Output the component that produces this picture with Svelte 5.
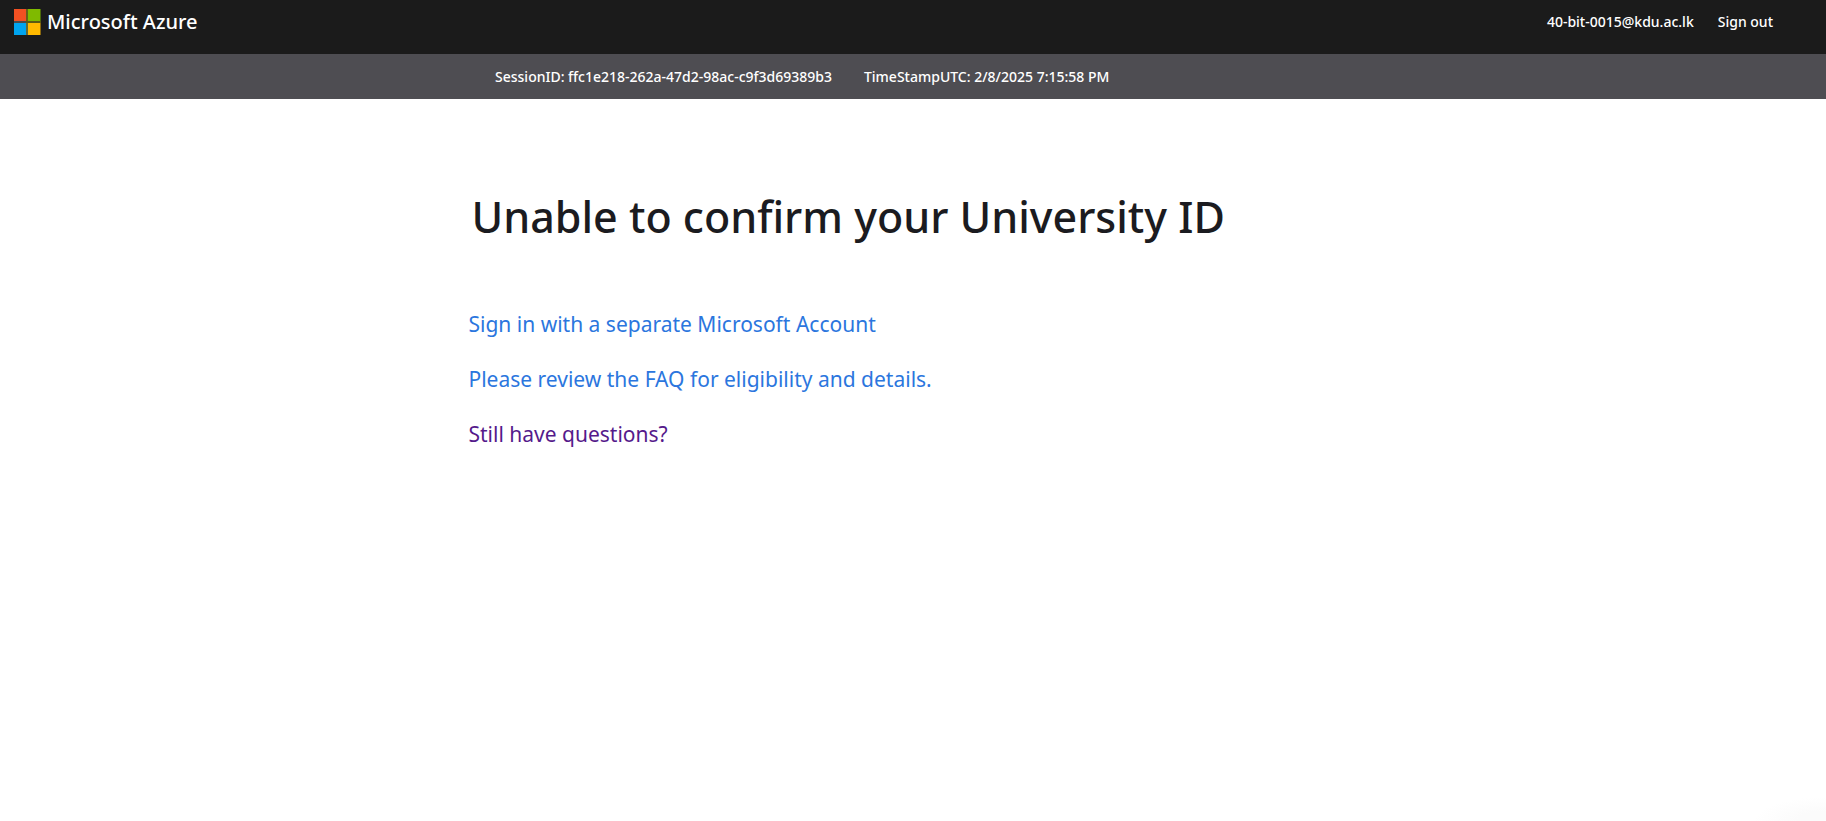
<script>
  const user = '40-bit-0015@kdu.ac.lk';
  const session = 'ffc1e218-262a-47d2-98ac-c9f3d69389b3';
  const timestamp = '2/8/2025 7:15:58 PM';
  const links = [
    { text: 'Sign in with a separate Microsoft Account' },
    { text: 'Please review the FAQ for eligibility and details.' },
    { text: 'Still have questions?', seen: true }
  ];
</script>

<div class="page">
  <header class="top">
    <a class="brand" href="#home">
      <svg viewBox="0 0 27 26" width="27" height="26" aria-hidden="true">
        <path d="M12 0h2v12h-2z" fill="#66601a" />
        <path d="M12 14h2v12h-2z" fill="#5f6a3a" />
        <path d="M0 12h12v2H0z" fill="#4a4b4b" />
        <path d="M12 12h15v2H12z" fill="#5b5a14" />
        <path d="M26 0h1v12h-1z" fill="#4b6b0b" />
        <path d="M26 14h1v12h-1z" fill="#8a680f" />
        <rect width="12" height="12" fill="#f25022" />
        <rect x="14" width="12" height="12" fill="#7fba00" />
        <rect y="14" width="12" height="12" fill="#00a4ef" />
        <rect x="14" y="14" width="12" height="12" fill="#ffb900" />
      </svg>
      <span>Microsoft Azure</span>
    </a>
    <nav class="account">
      <span>{user}</span>
      <a href="#signout">Sign out</a>
    </nav>
  </header>
  <div class="session">
    <span>SessionID: {session}</span>
    <span>TimeStampUTC: {timestamp}</span>
  </div>
  <main>
    <h1>Unable to confirm your University ID</h1>
    <ul>
      {#each links as link}
        <li><a class:seen={link.seen} href="#help">{link.text}</a></li>
      {/each}
    </ul>
  </main>
</div>

<style>
  :global(body) {
    margin: 0;
    background: #fff;
  }
  .page {
    box-sizing: border-box;
    min-height: 100vh;
    font-family: 'Segoe UI', 'Noto Sans', 'Open Sans', sans-serif;
    background: radial-gradient(ellipse 72px 24px at 100% 100%, #fbfbfb 40%, #fff 100%) no-repeat;
  }
  .top {
    display: flex;
    justify-content: space-between;
    align-items: flex-start;
    box-sizing: border-box;
    height: 54px;
    padding: 8px 53px 0 14px;
    background: #1b1b1b;
    color: #fff;
  }
  .top a {
    color: inherit;
    text-decoration: none;
  }
  .brand {
    display: flex;
    align-items: center;
    gap: 6px;
    font-size: 20px;
    line-height: 28px;
    font-weight: 500;
  }
  .account {
    display: flex;
    gap: 24px;
    font-size: 14px;
    line-height: 28px;
    font-weight: 500;
  }
  .session {
    display: flex;
    gap: 32px;
    padding: 0 27%;
    font-size: 14px;
    line-height: 45px;
    font-weight: 500;
    white-space: nowrap;
    background: #4e4d52;
    color: #fff;
  }
  .session span:first-child {
    margin-left: 2px;
  }
  main {
    padding: 86px 25% 0;
    margin-left: 12px;
  }
  h1 {
    margin: 0 0 59px 3px;
    font-size: 43px;
    line-height: 64px;
    font-weight: 500;
    color: #1b1b20;
    white-space: nowrap;
  }
  ul {
    display: grid;
    gap: 23px;
    margin: 0;
    padding: 0;
    list-style: none;
    font-size: 21px;
    line-height: 32px;
    white-space: nowrap;
  }
  li a {
    color: #2b76de;
    text-decoration: none;
  }
  li a.seen {
    color: #551a8b;
  }
</style>
